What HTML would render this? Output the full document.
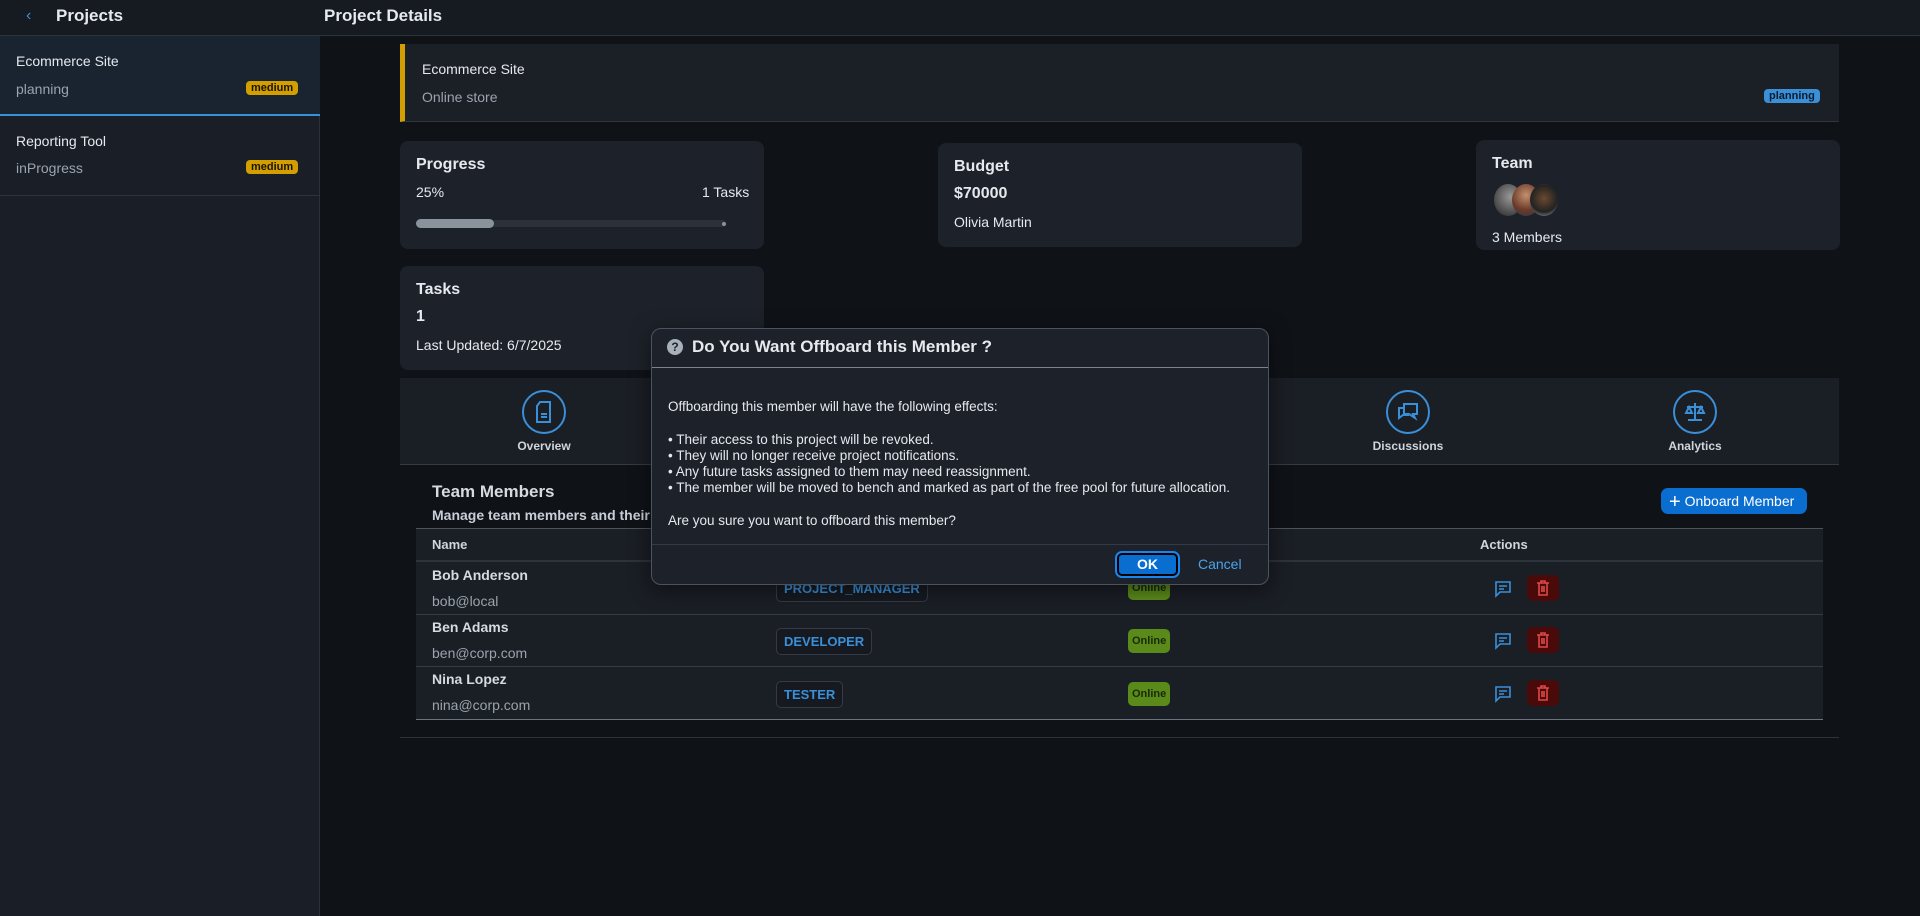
<!DOCTYPE html>
<html><head><meta charset="utf-8"><style>
*{box-sizing:border-box;margin:0;padding:0}
body{width:1920px;height:916px;overflow:hidden;background:#0f1217;font-family:"Liberation Sans",sans-serif;color:#e6e9ee;font-size:14px;position:relative}
.abs{position:absolute}
.side{left:0;top:0;width:320px;height:916px;background:#1a1f27;border-right:1px solid #2a313b}
.hdr{left:0;top:0;width:1920px;height:36px;border-bottom:1px solid #2c333d;background:#161b22}
.card{background:#1d222a;border-radius:8px}
.badge{font-size:11px;font-weight:bold;border-radius:4px;padding:0 5px;line-height:14px}
.med{background:#d29e00;color:#1a1400}
.muted{color:#9aa3ae}
.tab{position:absolute;top:0;width:288px;height:87px;text-align:center}
.tab .ic{width:44px;height:44px;border:2px solid #3a8fd9;border-radius:50%;margin:12px auto 0;display:flex;align-items:center;justify-content:center}
.tab .lb{font-size:12px;font-weight:bold;color:#cfd5dc;margin-top:5px}
.row{position:absolute;left:416px;width:1407px;border-bottom:1px solid #343b46;background:#1a1e25}
.role{position:absolute;left:776px;border:1px solid #343b46;border-radius:5px;color:#3a8fd9;font-weight:bold;font-size:13px;padding:5px 7px;background:#161a20}
.onl{position:absolute;left:1128px;background:#5a8a1a;color:#1a2a05;font-weight:bold;font-size:11px;border-radius:5px;padding:6px 4px}
.del{position:absolute;left:1527px;width:32px;height:26px;background:#4a0a0a;border-radius:6px;display:flex;align-items:center;justify-content:center}
.chat{position:absolute;left:1494px}
</style></head><body>
<div class="abs hdr"></div>
<div class="abs side"></div>
<div class="abs" style="left:0;top:0;width:320px;height:36px;border-bottom:1px solid #2c333d;background:#161b22"></div>
<div class="abs" style="left:26px;top:7px;color:#3a8fd9;font-size:16px">&#8249;</div>
<div class="abs" style="left:56px;top:6px;font-size:17px;font-weight:bold">Projects</div>
<div class="abs" style="left:324px;top:6px;font-size:17px;font-weight:bold">Project Details</div>
<div class="abs" style="left:0;top:36px;width:320px;height:80px;background:#1a2431;border-bottom:2px solid #3a8fd9"></div>
<div class="abs" style="left:16px;top:53px">Ecommerce Site</div>
<div class="abs muted" style="left:16px;top:81px">planning</div>
<div class="abs badge med" style="left:246px;top:81px">medium</div>
<div class="abs" style="left:0;top:195px;width:320px;border-bottom:1px solid #2c333d"></div>
<div class="abs" style="left:16px;top:133px">Reporting Tool</div>
<div class="abs muted" style="left:16px;top:160px">inProgress</div>
<div class="abs badge med" style="left:246px;top:160px">medium</div>

<div class="abs" style="left:400px;top:44px;width:1439px;height:78px;background:#1b1f26;border-left:5px solid #d29e00;border-bottom:1px solid #2f353e"></div>
<div class="abs" style="left:422px;top:61px;font-size:14px">Ecommerce Site</div>
<div class="abs muted" style="left:422px;top:89px">Online store</div>
<div class="abs badge" style="left:1764px;top:89px;background:#3a8fd9;color:#0d1b2a;font-size:11px">planning</div>

<div class="abs card" style="left:400px;top:141px;width:364px;height:108px"></div>
<div class="abs" style="left:416px;top:156px;font-size:16px;font-weight:bold">Progress</div>
<div class="abs" style="left:416px;top:184px">25%</div>
<div class="abs" style="left:702px;top:184px">1 Tasks</div>
<div class="abs" style="left:416px;top:220px;width:310px;height:7px;background:#2a313b;border-radius:4px"></div>
<div class="abs" style="left:416px;top:220px;width:78px;height:9px;top:219px;background:#8a929c;border-radius:5px"></div>
<div class="abs" style="left:722px;top:222px;width:4px;height:4px;background:#8a929c;border-radius:2px"></div>

<div class="abs card" style="left:938px;top:143px;width:364px;height:104px"></div>
<div class="abs" style="left:954px;top:158px;font-size:16px;font-weight:bold">Budget</div>
<div class="abs" style="left:954px;top:185px;font-size:16px;font-weight:bold">$70000</div>
<div class="abs" style="left:954px;top:214px">Olivia Martin</div>

<div class="abs card" style="left:1476px;top:140px;width:364px;height:110px"></div>
<div class="abs" style="left:1492px;top:155px;font-size:16px;font-weight:bold">Team</div>
<div class="abs" style="left:1494px;top:184px;width:28px;height:32px;border-radius:50%;background:radial-gradient(circle at 60% 40%,#999,#222)"></div>
<div class="abs" style="left:1512px;top:184px;width:28px;height:32px;border-radius:50%;background:radial-gradient(circle at 50% 35%,#c49070,#6a3a28 60%,#2a3550)"></div>
<div class="abs" style="left:1530px;top:184px;width:28px;height:32px;border-radius:50%;background:radial-gradient(circle at 50% 45%,#6a4a30,#222 60%,#bbb)"></div>
<div class="abs" style="left:1492px;top:229px">3 Members</div>

<div class="abs card" style="left:400px;top:266px;width:364px;height:104px"></div>
<div class="abs" style="left:416px;top:281px;font-size:16px;font-weight:bold">Tasks</div>
<div class="abs" style="left:416px;top:308px;font-size:16px;font-weight:bold">1</div>
<div class="abs" style="left:416px;top:337px">Last Updated: 6/7/2025</div>

<div class="abs" style="left:400px;top:378px;width:1439px;height:87px;background:#1a1e25;border-bottom:1px solid #343b46">
 <div class="tab" style="left:0"><div class="ic"><svg width="22" height="24" viewBox="0 0 22 24" fill="none" stroke="#3a8fd9" stroke-width="2"><path d="M7 2h10v20H4V6z"/><path d="M8 14h6M8 17h6"/></svg></div><div class="lb">Overview</div></div>
 <div class="tab" style="left:864px"><div class="ic"><svg width="24" height="24" viewBox="0 0 24 24" fill="none" stroke="#3a8fd9" stroke-width="2"><path d="M8 4h13v10h-4l2 4-6-4H8z"/><path d="M8 8H3v10l4-3h6"/></svg></div><div class="lb">Discussions</div></div>
 <div class="tab" style="left:1151px"><div class="ic"><svg width="24" height="24" viewBox="0 0 24 24" fill="none" stroke="#3a8fd9" stroke-width="2"><path d="M12 3v17M5 20h14M4 7h16M6 7l-3 6h6zM18 7l-3 6h6z"/></svg></div><div class="lb">Analytics</div></div>
</div>

<div class="abs" style="left:432px;top:482px;font-size:17px;font-weight:bold;color:#d6dbe1">Team Members</div>
<div class="abs" style="left:432px;top:507px;font-size:14px;font-weight:bold;color:#c8ced6">Manage team members and their roles</div>
<div class="abs" style="left:1661px;top:488px;width:146px;height:26px;background:#0a6ed1;border-radius:7px;color:#fff;font-size:14px;line-height:26px;padding-left:8px"><span style="font-size:20px;vertical-align:-2px">+</span> Onboard Member</div>
<div class="abs" style="left:416px;top:528px;width:1407px;height:34px;background:#1a1e25;border-top:1px solid #4a5360;border-bottom:2px solid #2c333d"></div>
<div class="abs" style="left:432px;top:537px;font-weight:bold;font-size:13px;color:#cfd5dc">Name</div>
<div class="abs" style="left:1480px;top:537px;font-weight:bold;font-size:13px;color:#cfd5dc">Actions</div>

<div class="row" style="top:562px;height:53px"></div>
<div class="abs" style="left:432px;top:567px;font-weight:bold;color:#d6dbe1">Bob Anderson</div>
<div class="abs muted" style="left:432px;top:593px">bob@local</div>
<div class="role" style="top:575px">PROJECT_MANAGER</div><div class="onl" style="top:576px">Online</div>
<div class="chat" style="top:580px"><svg width="18" height="18" viewBox="0 0 18 18" fill="none" stroke="#3a8fd9" stroke-width="1.6"><path d="M2 2h14v10H6l-4 4z"/><path d="M5 6h8M5 9h5"/></svg></div>
<div class="del" style="top:575px"><svg width="14" height="16" viewBox="0 0 14 16" fill="none" stroke="#e04848" stroke-width="1.6"><path d="M1 3h12M5 3V1h4v2M3 3v12h8V3M6 6v6M8 6v6"/></svg></div>

<div class="row" style="top:615px;height:52px"></div>
<div class="abs" style="left:432px;top:619px;font-weight:bold;color:#d6dbe1">Ben Adams</div>
<div class="abs muted" style="left:432px;top:645px">ben@corp.com</div>
<div class="role" style="top:628px">DEVELOPER</div><div class="onl" style="top:629px">Online</div>
<div class="chat" style="top:632px"><svg width="18" height="18" viewBox="0 0 18 18" fill="none" stroke="#3a8fd9" stroke-width="1.6"><path d="M2 2h14v10H6l-4 4z"/><path d="M5 6h8M5 9h5"/></svg></div>
<div class="del" style="top:627px"><svg width="14" height="16" viewBox="0 0 14 16" fill="none" stroke="#e04848" stroke-width="1.6"><path d="M1 3h12M5 3V1h4v2M3 3v12h8V3M6 6v6M8 6v6"/></svg></div>

<div class="row" style="top:667px;height:53px;border-bottom:1px solid #6a737e"></div>
<div class="abs" style="left:432px;top:671px;font-weight:bold;color:#d6dbe1">Nina Lopez</div>
<div class="abs muted" style="left:432px;top:697px">nina@corp.com</div>
<div class="role" style="top:681px">TESTER</div><div class="onl" style="top:682px">Online</div>
<div class="chat" style="top:685px"><svg width="18" height="18" viewBox="0 0 18 18" fill="none" stroke="#3a8fd9" stroke-width="1.6"><path d="M2 2h14v10H6l-4 4z"/><path d="M5 6h8M5 9h5"/></svg></div>
<div class="del" style="top:680px"><svg width="14" height="16" viewBox="0 0 14 16" fill="none" stroke="#e04848" stroke-width="1.6"><path d="M1 3h12M5 3V1h4v2M3 3v12h8V3M6 6v6M8 6v6"/></svg></div>
<div class="abs" style="left:400px;top:737px;width:1439px;border-top:1px solid #2c333d"></div>

<!-- dialog -->
<div class="abs" style="left:651px;top:328px;width:618px;height:257px;background:#1d222a;border:1px solid #4a5360;border-radius:10px;box-shadow:0 4px 20px rgba(0,0,0,.5)"></div>
<div class="abs" style="left:667px;top:339px;width:16px;height:16px;border-radius:50%;background:#a8b0ba;color:#1d222a;font-size:12px;font-weight:bold;text-align:center;line-height:16px">?</div>
<div class="abs" style="left:692px;top:337px;font-size:17px;font-weight:bold">Do You Want Offboard this Member ?</div>
<div class="abs" style="left:652px;top:367px;width:616px;border-top:1px solid #7a838e"></div>
<div class="abs" style="left:668px;top:399px;font-size:13.5px;line-height:16.3px;color:#e6e9ee">Offboarding this member will have the following effects:<br><br>• Their access to this project will be revoked.<br>• They will no longer receive project notifications.<br>• Any future tasks assigned to them may need reassignment.<br>• The member will be moved to bench and marked as part of the free pool for future allocation.<br><br>Are you sure you want to offboard this member?</div>
<div class="abs" style="left:652px;top:544px;width:616px;border-top:1px solid #343b46"></div>
<div class="abs" style="left:1117px;top:553px;width:61px;height:23px;background:#0a6ed1;border:2px solid #000;outline:2px solid #1a84f0;border-radius:5px;color:#fff;font-weight:bold;text-align:center;line-height:19px;font-size:14px">OK</div>
<div class="abs" style="left:1198px;top:556px;color:#4ba3ea;font-size:14px">Cancel</div>
</body></html>
